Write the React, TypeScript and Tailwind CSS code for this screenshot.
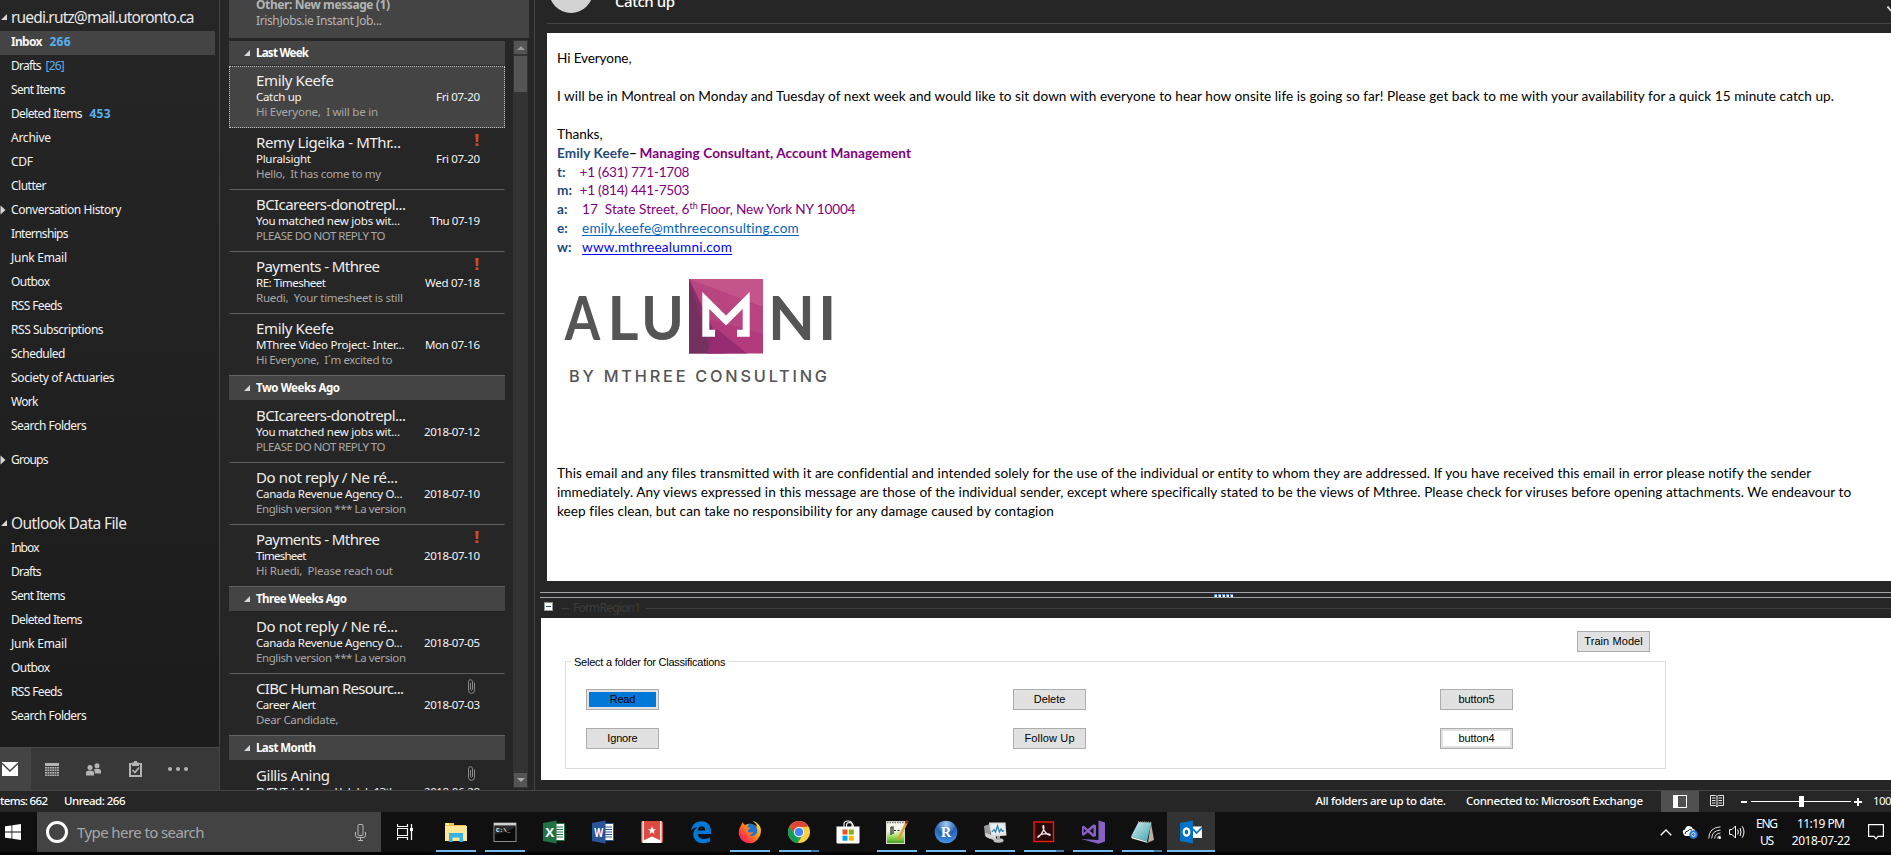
import { useLayoutEffect, useRef, useState } from "react";
import type { ReactNode } from "react";

/** Text tracked so that it fills exactly `w` pixels. */
function Fit({ w, children, className = "" }: { w: number; children: string; className?: string }) {
  const ref = useRef<HTMLSpanElement>(null);
  const [ls, setLs] = useState(0);
  useLayoutEffect(() => {
    if (!ref.current) return;
    ref.current.style.letterSpacing = "0px";
    const natural = ref.current.getBoundingClientRect().width;
    const next = (w - natural) / Math.max(1, children.length - 1);
    ref.current.style.letterSpacing = `${next}px`;
    setLs(next);
  }, [w, children]);
  return (
    <span className={`inline-block shrink-0 whitespace-pre ${className}`} style={{ width: w }}>
      <span ref={ref} style={{ letterSpacing: ls }}>
        {children}
      </span>
    </span>
  );
}

type Folder = { name: string; w: number; count?: string; cw?: number; bold?: boolean; arrow?: boolean };

const folders: Folder[] = [
  { name: "Inbox", w: 31.5, count: "266", cw: 21, bold: true },
  { name: "Drafts", w: 30.6, count: "[26]", cw: 19 },
  { name: "Sent Items", w: 54.5 },
  { name: "Deleted Items", w: 71.5, count: "453", cw: 21 },
  { name: "Archive", w: 40 },
  { name: "CDF", w: 22 },
  { name: "Clutter", w: 35.5 },
  { name: "Conversation History", w: 110.5, arrow: true },
  { name: "Internships", w: 57.5 },
  { name: "Junk Email", w: 56 },
  { name: "Outbox", w: 39 },
  { name: "RSS Feeds", w: 51.5 },
  { name: "RSS Subscriptions", w: 92.6 },
  { name: "Scheduled", w: 54.5 },
  { name: "Society of Actuaries", w: 103.6 },
  { name: "Work", w: 27.5 },
  { name: "Search Folders", w: 75.8 },
];

const dataFile: Folder[] = [
  { name: "Inbox", w: 28.5 },
  { name: "Drafts", w: 30.6 },
  { name: "Sent Items", w: 54.5 },
  { name: "Deleted Items", w: 71.5 },
  { name: "Junk Email", w: 56 },
  { name: "Outbox", w: 39 },
  { name: "RSS Feeds", w: 51.5 },
  { name: "Search Folders", w: 75.8 },
];

const Closed = () => (
  <svg className="w-[6px] h-[10px]" viewBox="0 0 6 10"><path d="M0.5 0.5L5.5 5L0.5 9.5Z" fill="#d8d8d8" /></svg>
);
const Open = () => (
  <svg className="w-[6px] h-[6px]" viewBox="0 0 6 6"><path d="M6 0V6H0Z" fill="#d8d8d8" /></svg>
);

function FolderRow({ f, active }: { f: Folder; active?: boolean }) {
  const boldCount = f.count && f.count[0] !== "[";
  return (
    <div className={`flex h-6 w-[215px] items-center pb-[2px] text-[12px] leading-[22px] text-[#f4f4f4] ${active ? "bg-[#444444]" : ""}`}>
      <div className="w-[11px] shrink-0 flex items-center">{f.arrow && <Closed />}</div>
      <Fit w={f.w} className={f.bold ? "font-bold" : ""}>{f.name}</Fit>
      {f.count && (
        <Fit w={f.cw!} className={`text-[#57b0f0] ${boldCount ? "ml-[7px] font-bold" : "ml-[4px]"}`}>{f.count}</Fit>
      )}
    </div>
  );
}

function Sidebar() {
  return (
    <div className="flex h-[790px] w-[219px] shrink-0 flex-col bg-linear-to-b from-[#262626] to-[#1b1b1b]">
      <div className="flex h-[31px] items-center pt-[3px] text-[15.5px] leading-[22px] text-[#e8e8e8]">
        <div className="w-[11px] pl-[1px]"><Open /></div>
        <Fit w={183.5}>ruedi.rutz@mail.utoronto.ca</Fit>
      </div>
      {folders.map((f, i) => <FolderRow key={f.name} f={f} active={i === 0} />)}
      <div className="h-[10px]" />
      <FolderRow f={{ name: "Groups", w: 37.5, arrow: true }} />
      <div className="mt-[40px] flex h-6 items-center pb-[4px] text-[15.5px] leading-[20px] text-[#e8e8e8]">
        <div className="w-[11px] pl-[1px]"><Open /></div>
        <Fit w={116}>Outlook Data File</Fit>
      </div>
      {dataFile.map((f) => <FolderRow key={f.name} f={f} />)}
      <div className="mt-auto flex h-[43px] items-center border-t border-[#484848] bg-[#383838]">
        <div className="flex h-full w-[31px] items-center bg-[#444444] pl-[2px]">
          <svg className="h-[14px] w-[16px]" viewBox="0 0 16 14">
            <rect width="16" height="14" fill="#fff" />
            <path d="M0 1.2L8 9L16 1.2" fill="none" stroke="#444" strokeWidth="1.4" />
          </svg>
        </div>
        <svg className="ml-[14px] h-[13px] w-[14px]" viewBox="0 0 14 13" fill="#b4b4b4">
          <rect width="14" height="3" />
          {[4, 6.5, 9, 11.5].map((y) => [0, 2.4, 4.8, 7.2, 9.6, 12].map((x) => <rect key={`${x}-${y}`} x={x} y={y} width="1.9" height="1.6" />))}
        </svg>
        <svg className="ml-[27px] h-[13px] w-[15px]" viewBox="0 0 15 13" fill="#b4b4b4">
          <circle cx="4" cy="4.5" r="2.5" /><path d="M0 12.5V10Q0 7.6 4 7.6T8 10V12.5Z" />
          <circle cx="11" cy="2.8" r="2.5" /><path d="M8.8 10.5V9Q8.6 7.4 7.6 6.8Q8.6 5.8 11 5.8Q15 5.8 15 8.2V10.5Z" />
        </svg>
        <svg className="ml-[28px] h-[16px] w-[13px]" viewBox="0 0 13 16">
          <path d="M1 2V15H12V2" fill="none" stroke="#b4b4b4" strokeWidth="2" />
          <path d="M0 2H3V1.5H5V0H8V1.5H10V2H13V3.4H10V5H3V3.4H0Z" fill="#b4b4b4" />
          <path d="M3.5 9L6 11.5L10 6.5" fill="none" stroke="#b4b4b4" strokeWidth="1.7" />
        </svg>
        <div className="ml-[26px] flex gap-[4px]">
          <i className="size-1 rounded-full bg-[#b4b4b4]" /><i className="size-1 rounded-full bg-[#b4b4b4]" /><i className="size-1 rounded-full bg-[#b4b4b4]" />
        </div>
      </div>
    </div>
  );
}

type Mail = { from: string; fw: number; subj: string; sw: number; date: string; dw: number; prev?: string; pw?: number; mark?: "!" | "clip"; selected?: boolean; last?: boolean };

const groups: { title: string; w: number; items: Mail[] }[] = [
  {
    title: "Last Week", w: 53, items: [
      { from: "Emily Keefe", fw: 78, subj: "Catch up", sw: 45.5, date: "Fri 07-20", dw: 44, prev: "Hi Everyone,  I will be in", pw: 122, selected: true },
      { from: "Remy Ligeika - MThr...", fw: 145, subj: "Pluralsight", sw: 55, date: "Fri 07-20", dw: 44, prev: "Hello,  It has come to my", pw: 125, mark: "!" },
      { from: "BCIcareers-donotrepl...", fw: 150, subj: "You matched new jobs wit...", sw: 144, date: "Thu 07-19", dw: 50, prev: "PLEASE DO NOT REPLY TO", pw: 129.5 },
      { from: "Payments - Mthree", fw: 124, subj: "RE: Timesheet", sw: 70, date: "Wed 07-18", dw: 55, prev: "Ruedi,  Your timesheet is still", pw: 147, mark: "!" },
      { from: "Emily Keefe", fw: 78, subj: "MThree Video Project- Inter...", sw: 148.5, date: "Mon 07-16", dw: 55, prev: "Hi Everyone,  I´m excited to", pw: 136.5, last: true },
    ],
  },
  {
    title: "Two Weeks Ago", w: 84, items: [
      { from: "BCIcareers-donotrepl...", fw: 150, subj: "You matched new jobs wit...", sw: 144, date: "2018-07-12", dw: 56, prev: "PLEASE DO NOT REPLY TO", pw: 129.5 },
      { from: "Do not reply / Ne ré...", fw: 142, subj: "Canada Revenue Agency O...", sw: 146.5, date: "2018-07-10", dw: 56, prev: "English version *** La version", pw: 150 },
      { from: "Payments - Mthree", fw: 124, subj: "Timesheet", sw: 50.5, date: "2018-07-10", dw: 56, prev: "Hi Ruedi,  Please reach out", pw: 137, mark: "!", last: true },
    ],
  },
  {
    title: "Three Weeks Ago", w: 91, items: [
      { from: "Do not reply / Ne ré...", fw: 142, subj: "Canada Revenue Agency O...", sw: 146.5, date: "2018-07-05", dw: 56, prev: "English version *** La version", pw: 150 },
      { from: "CIBC Human Resourc...", fw: 148, subj: "Career Alert", sw: 60, date: "2018-07-03", dw: 56, prev: "Dear Candidate,", pw: 82.5, mark: "clip", last: true },
    ],
  },
  {
    title: "Last Month", w: 60, items: [
      { from: "Gillis Aning", fw: 74, subj: "EVENT: L Mcgurd Job Job 13th", sw: 140, date: "2018-06-28", dw: 56, mark: "clip" },
    ],
  },
];

function MailRow({ m }: { m: Mail }) {
  return (
    <div className={`h-[62px] shrink-0 border ${m.selected ? "border-dotted border-[#c8c8c8] bg-[#444444]" : m.last ? "border-transparent" : "border-transparent border-b-[#616161]"}`}>
      <div className="flex h-[24px] pl-[26px] pt-[2px] text-[15px] leading-[22px] text-[#efefef]">
        <Fit w={m.fw}>{m.from}</Fit>
        {m.mark === "!" && (
          <svg className="ml-auto mr-[25px] mt-[3px] h-[12px] w-[4px]" viewBox="0 0 4 12" fill="#d24726"><path d="M0.3 0H3.7L3.2 8H0.8Z" /><rect x="0.5" y="9.3" width="3" height="2.7" /></svg>
        )}
        {m.mark === "clip" && (
          <svg className="ml-auto mr-[29px] mt-[2px] h-[15px] w-[7px]" viewBox="0 0 7 15" fill="none" stroke="#8a8a8a"><path d="M2.5 4V10.5Q3.5 12 4.5 10.5V3Q4.2 .6 2.5 .6Q.5 .8 .5 3V11.5Q.7 14.4 3.5 14.4Q6.3 14.4 6.5 11.5V3.5" /></svg>
        )}
      </div>
      <div className="-mt-[2px] flex h-[15px] pl-[26px] pr-[24px] text-[11.5px] leading-[16px] text-[#f4f4f4]">
        <Fit w={m.sw}>{m.subj}</Fit>
        <Fit w={m.dw} className="ml-auto">{m.date}</Fit>
      </div>
      {m.prev && (
        <div className="flex h-[15px] pl-[26px] text-[11.5px] leading-[15px] text-[#a8a8a8]">
          <Fit w={m.pw!}>{m.prev}</Fit>
        </div>
      )}
    </div>
  );
}

function MailList() {
  return (
    <div className="flex h-[790px] w-[316px] shrink-0 flex-col overflow-hidden border-x border-[#444444] bg-[#262626] pl-[9px]">
      <div className="h-[38px] w-[300px] shrink-0 bg-[#444444] pl-[27px] text-[12px] leading-[16px] text-[#b4b4b4]">
        <div className="-mt-[3px] h-[16px]"><Fit w={134} className="font-bold">Other: New message (1)</Fit></div>
        <div><Fit w={126}>IrishJobs.ie Instant Job...</Fit></div>
      </div>
      <div className="flex pt-[3px]">
        <div className="flex h-[749px] w-[276px] shrink-0 flex-col overflow-hidden">
          {groups.map((g, gi) => (
            <div key={g.title} className="flex shrink-0 flex-col">
              <div className={`mb-[1px] flex h-[24px] shrink-0 items-center bg-[#444444] pl-[15px] text-[11.5px] font-bold leading-[22px] text-white ${gi ? "shadow-[0_-1px_0_#616161]" : ""}`}>
                <Open />
                <Fit w={g.w} className="ml-[6px]">{g.title}</Fit>
              </div>
              {g.items.map((m, i) => <MailRow key={i} m={m} />)}
            </div>
          ))}
        </div>
        <div className="-mt-px ml-[8px] flex h-[748px] w-[15px] flex-col items-center bg-[#333333] py-[1px]">
          <div className="flex h-[13px] w-[13px] items-center justify-center bg-[#555555]"><svg className="h-[4px] w-[8px]" viewBox="0 0 8 4"><path d="M0 4L4 0L8 4Z" fill="#999" /></svg></div>
          <div className="mt-[2px] h-[36px] w-[13px] bg-[#555555]" />
          <div className="mt-auto flex h-[14px] w-[13px] items-center justify-center bg-[#555555]"><svg className="h-[4px] w-[8px]" viewBox="0 0 8 4"><path d="M0 0L4 4L8 0Z" fill="#aaa" /></svg></div>
        </div>
      </div>
    </div>
  );
}

function AlumniLogo() {
  return (
    <svg className="h-[110px] w-[280px]" viewBox="0 0 280 110" fontFamily="Lato, sans-serif" fill="#555555">
      <g fontSize="62" fontWeight="700">
        <text x="7.7" y="60.5" textLength="35.5" lengthAdjust="spacingAndGlyphs">A</text>
        <text x="50.5" y="60.5" textLength="31" lengthAdjust="spacingAndGlyphs">L</text>
        <text x="84" y="60.5" textLength="43" lengthAdjust="spacingAndGlyphs">U</text>
        <text x="211" y="60.5" textLength="47" lengthAdjust="spacingAndGlyphs">N</text>
        <text x="261" y="60.5">I</text>
      </g>
      <g>
        <rect x="132" y="0" width="74" height="74.5" fill="#b23a7d" />
        <path d="M132 0H206V28L160 12Z" fill="#c3558a" />
        <path d="M132 0L206 28V55L150 40Z" fill="#b84480" />
        <path d="M132 0L168 74.5H152L132 40Z" fill="#8c2d69" />
        <path d="M132 0L144 40L154 74.5H132Z" fill="#74305f" />
        <path d="M150 74.5L160 50L190 74.5Z" fill="#982c72" />
        <polyline points="158,54.2 148.8,54.2 148.8,21.5 169,41.5 189.2,21.5 189.2,54.2 180,54.2" fill="none" stroke="#fff" strokeWidth="7" />
      </g>
      <text x="12" y="102.5" fontSize="16.3" fontWeight="500" fontFamily="Inter, sans-serif" textLength="258" lengthAdjust="spacing">BY MTHREE CONSULTING</text>
    </svg>
  );
}

const Line = ({ children }: { children?: ReactNode }) => <div className="flex h-[19px] whitespace-pre leading-[19px]">{children}</div>;

function Btn({ label, w, kind }: { label: string; w: number; kind?: "blue" | "white" }) {
  const inner = kind === "blue" ? "bg-[#0078d7]" : kind === "white" ? "bg-white" : "bg-[#e1e1e1]";
  return (
    <div className="h-[21px] w-[73px] border border-[#adadad] bg-[#e1e1e1] p-[2px]">
      <div className={`flex h-full items-center justify-center text-[11px] leading-none text-black ${inner}`}><Fit w={w}>{label}</Fit></div>
    </div>
  );
}

function Reading() {
  return (
    <div className="flex h-[790px] min-w-0 flex-1 flex-col overflow-hidden bg-[#262626]">
      <div className="ml-[12px] flex h-[24px] shrink-0 items-start border-b border-[#444444]">
        <div className="ml-[2px] -mt-[31px] size-[44px] shrink-0 rounded-full bg-[#d2d2d2]" />
        <Fit w={60} className="-mt-[9px] ml-[22px] text-[15px] leading-[20px] text-white font-medium">Catch up</Fit>
        <svg className="ml-auto mt-[6px] h-[6px] w-[4px]" viewBox="0 0 4 6"><path d="M0.5 0.5L4 5" stroke="#ddd" strokeWidth="1.8" /></svg>
      </div>
      <div className="ml-[12px] mt-[9px] h-[548px] shrink-0 bg-white pl-[10px] pt-[16px] font-[Lato,sans-serif] text-[13.6px] text-black">
        <Line><Fit w={74.5}>Hi Everyone,</Fit></Line>
        <Line />
        <Line><Fit w={1277}>I will be in Montreal on Monday and Tuesday of next week and would like to sit down with everyone to hear how onsite life is going so far! Please get back to me with your availability for a quick 15 minute catch up.</Fit></Line>
        <Line />
        <Line><Fit w={45.5}>Thanks,</Fit></Line>
        <div className="text-[#800080]">
          <Line>
            <Fit w={72} className="font-bold text-[#1f497d]">Emily Keefe</Fit>
            <Fit w={7.5} className="text-black font-bold">–</Fit>
            <Fit w={271.5} className="ml-[3px] font-bold">Managing Consultant, Account Management</Fit>
          </Line>
          <div className="h-[18px]"><Line><span className="w-[22.5px] font-bold text-[#1f497d]">t:</span><Fit w={110}>+1 (631) 771-1708</Fit></Line></div>
          <Line><span className="w-[22.5px] font-bold text-[#1f497d]">m:</span><Fit w={110}>+1 (814) 441-7503</Fit></Line>
          <Line>
            <span className="w-[25px] font-bold text-[#1f497d]">a:</span>
            <Fit w={107.5}>17  State Street, 6</Fit>
            <span className="-mt-[4px] w-[10.5px] text-[9px]">th</span>
            <Fit w={155.5}>Floor, New York NY 10004</Fit>
          </Line>
          <Line><span className="w-[25px] font-bold text-[#1f497d]">e:</span><Fit w={217} className="text-[#0563c1] underline underline-offset-2">emily.keefe@mthreeconsulting.com</Fit></Line>
          <Line><span className="w-[25px] font-bold text-[#1f497d]">w:</span><Fit w={150} className="text-[#0000ff] underline underline-offset-2">www.mthreealumni.com</Fit></Line>
        </div>
        <div className="mt-[22px] h-[185px]"><AlumniLogo /></div>
        <Line><Fit w={1254}>This email and any files transmitted with it are confidential and intended solely for the use of the individual or entity to whom they are addressed. If you have received this email in error please notify the sender</Fit></Line>
        <Line><Fit w={1293.5}>immediately. Any views expressed in this message are those of the individual sender, except where specifically stated to be the views of Mthree. Please check for viruses before opening attachments. We endeavour to</Fit></Line>
        <Line><Fit w={496.5}>keep files clean, but can take no responsibility for any damage caused by contagion</Fit></Line>
      </div>
      <div className="ml-[5px] mt-[11px] flex h-[6px] shrink-0 items-end border-y border-[#a4a4ac] pl-[674px]">
        <div className="flex gap-[1px]">
          {[0, 1, 2, 3, 4].map((i) => <i key={i} className="size-[3px] border-l border-t border-[#5b8fd0] bg-white" />)}
        </div>
      </div>
      <div className="ml-[5px] flex h-[20px] shrink-0 items-center pl-[4px] text-[12px] text-[#3c3c3c]">
        <div className="-mt-[3px] flex size-[9px] items-center justify-center border border-[#999] bg-white"><i className="h-px w-[5px] bg-[#274a7a]" /></div>
        <i className="ml-[8px] h-px w-[8px] bg-[#3c3c3c]" />
        <Fit w={68} className="ml-[4px]">FormRegion1</Fit>
        <i className="ml-[5px] h-px flex-1 bg-[#3c3c3c]" />
      </div>
      <div className="ml-[6px] h-[162px] shrink-0 bg-white pt-[13px] font-['Liberation_Sans',sans-serif] text-[11px] text-black">
        <div className="ml-[1036px]"><Btn label="Train Model" w={58.5} /></div>
        <div className="ml-[24px] mt-[9px] h-[108px] w-[1101px] border border-[#dcdcdc]">
          <div className="-mt-[7px] ml-[5px] w-[158px] bg-white pl-[3px] leading-[14px]"><Fit w={151.5}>Select a folder for Classifications</Fit></div>
          <div className="ml-[20px] mt-[20px] grid grid-cols-[427px_427px_73px] gap-y-[18px]">
            <Btn label="Read" w={25.5} kind="blue" /><Btn label="Delete" w={31.5} /><Btn label="button5" w={36} />
            <Btn label="Ignore" w={30.5} /><Btn label="Follow Up" w={50} /><Btn label="button4" w={36} kind="white" />
          </div>
        </div>
      </div>
    </div>
  );
}

function StatusBar() {
  return (
    <div className="flex h-[22px] shrink-0 items-center overflow-hidden border-t border-[#444444] bg-[#262626] text-[11.5px] leading-[18px] text-white">
      <Fit w={48} className="pb-[2px] font-medium">tems: 662</Fit>
      <Fit w={61.5} className="ml-[16px] pb-[2px] font-medium">Unread: 266</Fit>
      <Fit w={130.5} className="ml-[1190px] pb-[2px] font-medium">All folders are up to date.</Fit>
      <Fit w={177} className="ml-[20px] pb-[2px] font-medium">Connected to: Microsoft Exchange</Fit>
      <div className="ml-[18px] flex h-full w-[38px] shrink-0 items-center justify-center bg-[#505050]">
        <svg className="h-[13px] w-[14px]" viewBox="0 0 14 13"><rect x=".5" y=".5" width="13" height="12" fill="none" stroke="#fff" /><rect width="5" height="13" fill="#fff" /></svg>
      </div>
      <svg className="ml-[11px] h-[13px] w-[14px] shrink-0" viewBox="0 0 14 13" fill="none" stroke="#e8e8e8">
        <path d="M.5 .5H5.5L7 1.5L8.5 .5H13.5V10.5H8.5L7 12L5.5 10.5H.5ZM7 1.5V12M2 3H5.5M2 5.5H5.5M2 8H5.5M8.5 3H12M8.5 5.5H12M8.5 8H12" />
      </svg>
      <i className="ml-[17px] h-[2px] w-[6px] shrink-0 bg-white" />
      <div className="ml-[4px] flex w-[100px] shrink-0 items-center"><i className="h-px w-[48px] bg-white" /><i className="h-[11px] w-[5px] bg-white" /><i className="h-px flex-1 bg-white" /></div>
      <svg className="ml-[3px] size-[8px] shrink-0" viewBox="0 0 8 8"><path d="M4 0V8M0 4H8" stroke="#fff" strokeWidth="2" /></svg>
      <span className="ml-[11px] shrink-0 pb-[1px] tracking-[-0.6px]">100</span>
    </div>
  );
}

const FolderIcon = () => (
  <svg viewBox="0 0 24 24"><path d="M1 3H10V5H22V20H1Z" fill="#f2c14a" /><path d="M1 6H23V21H1Z" fill="#ffe797" /><path d="M5 22V13H19V22H15.5V17.5H8.5V22Z" fill="#35b1e8" /><rect x="2" y="3" width="3" height="2" fill="#fff3a0" /></svg>
);
const CmdIcon = () => (
  <svg viewBox="0 0 24 24"><rect x="1" y="3" width="22" height="18.5" fill="#0a0a0a" stroke="#888" /><rect x="1" y="3" width="22" height="2.5" fill="#cfcfcf" /><path d="M2 14Q14 13 22 7V6H2Z" fill="#2a2a2a" /><text x="3" y="12" fontSize="6" fontWeight="bold" fill="#fff" fontFamily="Liberation Mono, monospace">C:\_</text></svg>
);
const OfficeIcon = ({ c, t }: { c: string; t: string }) => (
  <svg viewBox="0 0 24 24"><rect x="12" y="3.5" width="10.5" height="17" fill="#fff" stroke={c} /><path d="M14 7H21M14 9.5H21M14 12H21M14 14.5H21M14 17H21" stroke={c} /><path d="M1 3L14.5 .5V23.5L1 21Z" fill={c} /><text x="3.2" y="16.5" fontSize="12" fontWeight="bold" fill="#fff" fontFamily="Open Sans, sans-serif" textLength="9" lengthAdjust="spacingAndGlyphs">{t}</text></svg>
);
const WunderIcon = () => (
  <svg viewBox="0 0 24 24"><rect x="1" y="1" width="22" height="22" rx="2" fill="#dd4b40" /><path d="M3.2 1V23M20.8 1V23" fill="none" stroke="#fff" strokeWidth="1.4" /><path d="M3 23V20.5L7 18.5L12 16L17 18.5L21 20.5V23Z" fill="#fff" /><path d="M4 1H20V20L12 16.5L4 20Z" fill="#dd4b40" /><path d="M12 6.2L13.1 9.2L16 9.3L13.7 11.1L14.5 14L12 12.3L9.5 14L10.3 11.1L8 9.3L10.9 9.2Z" fill="#fff" /></svg>
);
const EdgeIcon = () => (
  <svg viewBox="0 0 24 24" fill="#0078d7"><path d="M2 10.5C3 5 6.5 1.3 12.3 1.3C18.8 1.3 22 5.8 22 11.5V14H8.8C9 17.4 12 19 15 19C17.5 19 19.6 18.2 21 17.3V21.6C19.2 22.6 16.7 23.2 14 23.2C7.8 23.2 4.2 19.4 4.2 14.6C4.2 11.2 6.2 8.5 9 7.1C6.4 7.4 3.8 8.6 2 10.5ZM8.8 10.4H16.2C16.2 7.8 15 6.2 12.8 6.2C10.4 6.2 9 8.2 8.8 10.4Z" /></svg>
);
const FirefoxIcon = () => (
  <svg viewBox="0 0 24 24">
    <defs><linearGradient id="ff" x1="1" y1="0" x2="0" y2="1"><stop offset="0" stopColor="#fff44f" /><stop offset=".4" stopColor="#ff980e" /><stop offset=".75" stopColor="#ff3647" /><stop offset="1" stopColor="#e31587" /></linearGradient></defs>
    <circle cx="12" cy="11" r="7.5" fill="#1f74d0" />
    <path d="M3 5.5Q4 2.5 5 2Q5 4 7 5Q9 4 11 4.4Q9 6 9.4 7.5H12Q12 9 9.8 10Q9.5 12 12 12.6Q14 12.8 15.5 12Q14 15.5 11 15Q16 18 19 13Q20 9 17 5Q19 6 19.5 7.5Q18 3 14.8 .8Q20 2.5 22.3 7Q24 12.5 21.2 17Q17.5 23.3 12 23.3Q3.5 23.3 1 15Q0 10 3 5.5Z" fill="url(#ff)" />
  </svg>
);
const ChromeIcon = () => (
  <svg viewBox="0 0 24 24"><circle cx="12" cy="12" r="11" fill="#ffcd40" /><path d="M2.5 6.5A11 11 0 0 1 21.5 6.5L12 7Z" fill="#db4437" /><path d="M2.5 6.5L7.6 14.5L8 10L12 7H21.5Z" fill="#db4437" /><path d="M2.5 6.5L7.7 14.6L12 17L10.9 23A11 11 0 0 1 2.5 6.5Z" fill="#0f9d58" /><path d="M10.9 23L15.5 15L12 17Z" fill="#0f9d58" /><circle cx="12" cy="12" r="5.2" fill="#f1f1f1" /><circle cx="12" cy="12" r="4.1" fill="#4285f4" /></svg>
);
const StoreIcon = () => (
  <svg viewBox="0 0 24 24"><path d="M8 7V4Q8 1 12 1T16 4V7M10.5 7V4.5Q11 2.5 13.5 2.5Q17.5 3 17.5 7" fill="none" stroke="#fff" strokeWidth="1.1" /><path d="M.5 6.5H23.5V22.5Q23.5 23.5 22.5 23.5H1.5Q.5 23.5 .5 22.5Z" fill="#fff" /><rect x="6.5" y="9.5" width="5" height="5" fill="#f25022" /><rect x="12.8" y="9.5" width="5" height="5" fill="#7fba00" /><rect x="6.5" y="15.7" width="5" height="5" fill="#00a4ef" /><rect x="12.8" y="15.7" width="5" height="5" fill="#ffb900" /></svg>
);
const NppIcon = () => (
  <svg viewBox="0 0 24 24">
    <defs><linearGradient id="np" x1="0" y1="0" x2="0" y2="1"><stop offset=".4" stopColor="#f4f6ee" /><stop offset=".68" stopColor="#a4dc62" /><stop offset="1" stopColor="#3f9a1c" /></linearGradient></defs>
    <rect x="1.5" y="1.5" width="18" height="22" fill="url(#np)" stroke="#d8dcd0" /><path d="M2 2.5H19" stroke="#777" strokeWidth="1.5" strokeDasharray="1.5 1" /><path d="M6 7V15M6 7H8V14M9 10.5H11M12.5 10.5H14.5" stroke="#222" fill="none" strokeWidth="1.2" /><path d="M22 1.5L14.5 17L13 19.5" stroke="#e0a02c" strokeWidth="2.6" fill="none" /><path d="M21 3.6L22.6 .6" stroke="#8c2f20" strokeWidth="2.6" />
  </svg>
);
const RIcon = () => (
  <svg viewBox="0 0 24 24">
    <defs><radialGradient id="rg" cx=".5" cy=".15" r=".9"><stop offset="0" stopColor="#a8cdf2" /><stop offset=".5" stopColor="#2461b4" /><stop offset="1" stopColor="#4aa0ee" /></radialGradient></defs>
    <circle cx="12" cy="12" r="11.3" fill="url(#rg)" /><text x="7" y="16.5" fontSize="14" fill="#fff" fontFamily="Liberation Serif, serif" fontWeight="bold">R</text>
  </svg>
);
const PerfIcon = () => (
  <svg viewBox="0 0 24 24"><path d="M1 6L7 4V19L2 16Z" fill="#9a9a9a" /><path d="M2 13L13 16V21L3 17Z" fill="#d0d0d0" /><path d="M6 2.5L22.5 2.5L23.5 15.5L8 17Z" fill="#dcdcdc" /><path d="M8 4.5L21 4L21.8 13.5L9 14.8Z" fill="#e4f1fa" /><path d="M9 12L11 9.5L12.5 12L14.5 6L16.5 12L18 9L19.5 11.5L21 10.5" fill="none" stroke="#2a7ab0" strokeWidth="1.2" /><ellipse cx="15.5" cy="20.5" rx="5" ry="2.2" fill="#c0c0c0" /><path d="M14 16H17V20H14Z" fill="#aaa" /></svg>
);
const AcroIcon = () => (
  <svg viewBox="0 0 24 24"><rect x="2" y="2" width="19.5" height="19.5" fill="#2a0808" stroke="#ee1c0c" strokeWidth="1.4" /><path d="M6 17Q9.5 15 11.4 10Q12.4 6 11.4 5.5Q10.3 6 11.4 9Q13 13.3 17.3 15.3Q18.8 15.6 18 14.4Q14.5 12.6 8.2 15Q5.2 16.6 6 17.4Q6.8 17.6 8.2 15" fill="none" stroke="#f2e4e4" strokeWidth="1.2" /></svg>
);
const VsIcon = () => (
  <svg viewBox="0 0 24 24" fill="#8761c5"><path d="M17.5 .5L24 2.5V21.5L17.5 23.8L0 19L17.5 20Z" /><path d="M1 6.5L2.5 5.5L6.8 9L12.5 4.2L15 5.3V16L12.5 17.2L6.8 12.5L2.5 15.8L1 15ZM2.8 8.4V13L5 10.7ZM8.8 10.7L12.5 14V7.8Z" fillRule="evenodd" /></svg>
);
const NotepadIcon = () => (
  <svg viewBox="0 0 24 24">
    <defs><linearGradient id="nt" x1="0" y1="0" x2="1" y2="1"><stop offset="0" stopColor="#d6eff2" /><stop offset="1" stopColor="#3fa0ae" /></linearGradient></defs>
    <path d="M21 3L24 20L18 22.5Z" fill="#b8b0a0" /><path d="M8.5 2L21.5 2.5L17 21.5L1 16.5Z" fill="url(#nt)" /><path d="M1 16.5L17 21.5L18 23L2 18.5Z" fill="#efefef" /><path d="M8 1.8L21.5 2.4" stroke="#999" strokeWidth="1.4" strokeDasharray="1 1" />
  </svg>
);
const OutlookIcon = () => (
  <svg viewBox="0 0 24 24"><rect x="12" y="6.5" width="11" height="11.5" fill="#fff" /><path d="M14 9L17.5 13L23 7.5" fill="none" stroke="#0072c6" strokeWidth="1.7" /><path d="M1 3L14 .5V23.5L1 21Z" fill="#0072c6" /><ellipse cx="7.5" cy="12" rx="2.8" ry="3.7" fill="none" stroke="#fff" strokeWidth="2.2" /></svg>
);

const apps: { icon: ReactNode; run?: 1 | 2 | 3 }[] = [
  { icon: <FolderIcon />, run: 1 }, { icon: <CmdIcon />, run: 1 },
  { icon: <OfficeIcon c="#207245" t="X" /> }, { icon: <OfficeIcon c="#2a5699" t="W" /> },
  { icon: <WunderIcon /> }, { icon: <EdgeIcon /> }, { icon: <FirefoxIcon />, run: 1 }, { icon: <ChromeIcon />, run: 2 },
  { icon: <StoreIcon /> }, { icon: <NppIcon />, run: 1 }, { icon: <RIcon />, run: 1 }, { icon: <PerfIcon />, run: 1 },
  { icon: <AcroIcon />, run: 2 }, { icon: <VsIcon />, run: 1 }, { icon: <NotepadIcon />, run: 2 }, { icon: <OutlookIcon />, run: 3 },
];

function Taskbar() {
  return (
    <div className="flex h-[40px] shrink-0 overflow-hidden bg-[#101010] text-white">
      <div className="flex w-[37px] shrink-0 items-center pl-[5px]">
        <svg className="size-[16px]" viewBox="0 0 16 16" fill="#fff"><path d="M0 2.3L6.5 1.4V7.6H0ZM7.3 1.3L16 0V7.6H7.3ZM0 8.4H6.5V14.6L0 13.7ZM7.3 8.4H16V16L7.3 14.7Z" /></svg>
      </div>
      <div className="flex w-[344px] shrink-0 items-center bg-[#434343] pl-[9px]">
        <div className="size-[22px] rounded-full border-[3px] border-white" />
        <Fit w={127.5} className="ml-[9px] text-[15px] leading-[20px] text-[#a8a8a8]">Type here to search</Fit>
        <svg className="ml-auto mr-[15px] h-[17px] w-[11px]" viewBox="0 0 11 17" fill="none" stroke="#b8b8b8"><rect x="3" y=".5" width="5" height="11" rx="1" /><path d="M.5 8V11.5Q.5 13.5 3 13.5H8Q10.5 13.5 10.5 11.5V8M5.5 13.5V16.5M3 16.5H8" /></svg>
      </div>
      <div className="flex w-[51px] shrink-0 items-center pl-[16px]">
        <svg className="size-[16px]" viewBox="0 0 16 16" fill="none" stroke="#fff"><path d="M.5 0V2.5H10.5V0M.5 16V13.5H10.5V16M.5 4.5H10.5V11.5H.5ZM14.5 0V16" strokeWidth="1.2" /><rect x="13" y="4" width="3" height="3" fill="#fff" stroke="none" /></svg>
      </div>
      {apps.map((a, i) => (
        <div key={i} className={`mr-[1px] flex w-[48px] shrink-0 flex-col items-center ${a.run === 3 ? "bg-[#333333]" : ""}`}>
          <div className="mt-[8px] mb-[6px] size-[24px]">{a.icon}</div>
          {a.run === 1 && <div className="h-[2px] w-[40px] bg-[#76b9ed]" />}
          {a.run === 2 && <div className="flex h-[2px] w-[40px]"><div className="w-[32px] bg-[#76b9ed]" /><div className="flex-1 bg-[#4a7ba3]" /></div>}
          {a.run === 3 && <div className="h-[2px] w-[48px] bg-[#76b9ed]" />}
        </div>
      ))}
      <div className="ml-[444px] flex shrink-0 items-center text-[12px]">
        <svg className="h-[7px] w-[12px]" viewBox="0 0 12 7"><path d="M.7 6.3L6 1L11.3 6.3" fill="none" stroke="#fff" strokeWidth="1.3" /></svg>
        <svg className="ml-[10px] h-[14px] w-[16px]" viewBox="0 0 16 14"><path d="M1.5 9Q-.5 5 3 4.5Q4 .5 8 1.2Q10.5 1.8 10.8 4Q14 4 13 8L11 11H4Q2 11 1.5 9Z" fill="#fff" /><path d="M3 9Q3 6 6 6Q7.5 3.5 10 5" fill="none" stroke="#111" strokeWidth=".9" /><circle cx="11.5" cy="9.5" r="4.2" fill="#2d7bd8" /><path d="M9.3 9Q11.5 6.2 13.4 8.8M13.6 10Q11.5 12.8 9.6 10.4" fill="none" stroke="#fff" /></svg>
        <svg className="ml-[10px] h-[13px] w-[13px]" viewBox="0 0 13 13" fill="none" stroke="#ddd"><path d="M.7 12.5Q1 1.5 12.5 .8M3.7 12.5Q4 4.5 12.5 4M6.7 12.5Q7 7.5 12.5 7" /><path d="M9.5 12.5Q9.5 10 12.5 10" /><circle cx="11.7" cy="11.7" r="1.3" fill="#fff" stroke="none" /></svg>
        <svg className="ml-[8px] h-[14px] w-[17px]" viewBox="0 0 17 14" fill="none" stroke="#fff"><path d="M.6 4.5H3L6.5 1V13L3 9.5H.6ZM8.7 4.5Q10 7 8.7 9.5M11 3Q13 7 11 11M13.2 1.3Q16.8 7 13.2 12.7" /></svg>
        <div className="ml-[9px] flex w-[24px] flex-col items-center leading-[17px]"><Fit w={22}>ENG</Fit><Fit w={14}>US</Fit></div>
        <div className="ml-[12px] flex w-[60px] flex-col items-center leading-[17px]"><Fit w={48}>11:19 PM</Fit><Fit w={58.5}>2018-07-22</Fit></div>
        <svg className="ml-[17px] h-[16px] w-[16px]" viewBox="0 0 16 16"><path d="M.6 .6H15.4V12.4H10L8 14.8L6 12.4H.6Z" fill="none" stroke="#fff" strokeWidth="1.2" /></svg>
      </div>
    </div>
  );
}

export default function App() {
  return (
    <div className="flex h-[855px] w-[1891px] flex-col overflow-hidden bg-black font-['Noto_Sans',sans-serif]">
      <div className="flex h-[790px] shrink-0">
        <Sidebar />
        <MailList />
        <Reading />
      </div>
      <StatusBar />
      <Taskbar />
    </div>
  );
}
